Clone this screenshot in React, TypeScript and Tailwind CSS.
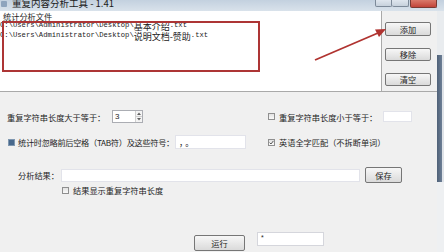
import type { FC, ReactNode } from 'react';

type BoxState = 'off' | 'on' | 'fill';

const CheckBox: FC<{ state?: BoxState }> = ({ state = 'off' }) => (
  <span
    className={
      state === 'fill'
        ? 'flex h-[7px] w-[7px] shrink-0 items-center justify-center border border-[#7f97b0] bg-[#47688c]'
        : 'flex h-[7px] w-[7px] shrink-0 items-center justify-center border border-[#8f8f8f] bg-linear-to-b from-[#e2e2e2] to-[#fafafa]'
    }
  >
    {state === 'on' && (
      <svg width="5" height="5" viewBox="0 0 5 5">
        <path d="M0.6 2.6 L2 4 L4.4 0.9" fill="none" stroke="#4a4a4a" strokeWidth="0.9" />
      </svg>
    )}
  </span>
);

const WinButton: FC<{ className: string; children: ReactNode }> = ({ className, children }) => (
  <button
    type="button"
    className={`flex shrink-0 items-center justify-center rounded-[2px] border border-[#767676] bg-linear-to-b from-[#f7f7f7] to-[#dadada] text-[8.2px] leading-none text-[#1e1e1e] ${className}`}
  >
    {children}
  </button>
);

const App: FC = () => {
  return (
    <div className="relative flex h-[252px] w-[444px] flex-col overflow-hidden bg-[#f0f0f0] font-['Noto_Sans_CJK_SC','Noto_Sans',sans-serif] text-[#1e1e1e]">
      {/* title bar, cut at top */}
      <div className="flex h-[11px] w-full shrink-0 items-start bg-linear-to-b from-[#c3d1df] to-[#d9e2eb]">
        <span className="ml-[1px] mt-[1px] h-[6px] w-[6px] rounded-[1px] bg-[#8ea4bd]" />
        <span className="ml-[5px] -mt-[2px] whitespace-nowrap text-[9.5px] leading-[11px] text-[#1b1b1b]">
          重复内容分析工具 - 1.41
        </span>
        <div className="ml-auto flex items-start">
          <span className="h-[7px] w-[17px] rounded-b-[2px] border border-t-0 border-[#7d8a99] bg-linear-to-b from-[#dfe6ee] to-[#c7d1dc]" />
          <span className="h-[7px] w-[17px] rounded-b-[2px] border border-t-0 border-l-0 border-[#7d8a99] bg-linear-to-b from-[#dfe6ee] to-[#c7d1dc]" />
          <span className="ml-[1px] mr-[7px] h-[8px] w-[27px] rounded-b-[2px] border border-t-0 border-[#7a3a33] bg-linear-to-b from-[#d9796b] to-[#c2443a]" />
        </div>
      </div>

      <div className="flex min-h-0 flex-1">
        {/* main window body */}
        <div className="flex w-[437px] shrink-0 flex-col">
          {/* file list section */}
          <div className="flex h-[81px] shrink-0 border-b border-[#a9a9a9]">
            <div className="relative w-[382px] shrink-0 border-r border-[#a9a9a9] bg-white">
              <div className="pl-[3px] text-[8.2px] leading-[10px]">统计分析文件</div>
              <div className="font-['Liberation_Mono','Noto_Sans_CJK_SC',monospace] text-[7.2px] text-[#222]">
                <div className="flex h-[10px] items-center whitespace-nowrap leading-none">
                  C:\Users\Administrator\Desktop\<span className="font-['Noto_Sans_CJK_SC',sans-serif] text-[9px] leading-none">基本介绍</span>.txt
                </div>
                <div className="flex h-[10px] items-center whitespace-nowrap leading-none">
                  C:\Users\Administrator\Desktop\<span className="font-['Noto_Sans_CJK_SC',sans-serif] text-[9px] leading-none">说明文档-赞助</span>.txt
                </div>
              </div>
              {/* red annotation box */}
              <div className="absolute left-[2px] top-[10px] h-[51px] w-[258px] border-2 border-[#ad3535]" />
            </div>
            <div className="flex flex-1 flex-col gap-[12px] pl-[3px] pt-[11px]">
              <WinButton className="h-[14px] w-[46px]">添加</WinButton>
              <WinButton className="h-[13px] w-[46px]">移除</WinButton>
              <WinButton className="h-[13px] w-[46px]">清空</WinButton>
            </div>
          </div>

          {/* options */}
          <div className="flex flex-col text-[8.2px] leading-[10px]">
            <div className="mt-[18px] flex h-[13px] items-center">
              <div className="flex w-[268px] shrink-0 items-center">
                <span className="ml-[7px] w-[105px] whitespace-nowrap">重复字符串长度大于等于：</span>
                <div className="flex h-[13px] w-[31px] items-stretch border border-[#abadb3] bg-white">
                  <span className="flex-1 pl-[2px] font-['Liberation_Sans',sans-serif] text-[8px] leading-[11px]">3</span>
                  <span className="flex w-[7px] flex-col border-l border-[#d0d0d0] bg-[#f4f4f4]">
                    <span className="flex flex-1 items-center justify-center border-b border-[#d0d0d0]">
                      <svg width="4" height="3" viewBox="0 0 4 3"><path d="M0 3 L2 0.5 L4 3 Z" fill="#606060" /></svg>
                    </span>
                    <span className="flex flex-1 items-center justify-center">
                      <svg width="4" height="3" viewBox="0 0 4 3"><path d="M0 0 L2 2.5 L4 0 Z" fill="#606060" /></svg>
                    </span>
                  </span>
                </div>
              </div>
              <CheckBox />
              <span className="ml-[4px] w-[104px] whitespace-nowrap">重复字符串长度小于等于：</span>
              <span className="h-[11px] w-[29px] border border-[#e2e3ea] bg-white" />
            </div>

            <div className="mt-[12px] flex h-[14px] items-center">
              <div className="flex w-[268px] shrink-0 items-center">
                <span className="ml-[8px]">
                  <CheckBox state="fill" />
                </span>
                <span className="ml-[3px] w-[157px] whitespace-nowrap tracking-[-0.3px]">统计时忽略前后空格（TAB符）及这些符号：</span>
                <span className="flex h-[14px] w-[71px] items-center border border-[#e2e3ea] bg-white pl-[3px] text-[8.5px] tracking-[2px]">，。</span>
              </div>
              <CheckBox state="on" />
              <span className="ml-[4px] whitespace-nowrap">英语全字匹配（不拆断单词）</span>
            </div>

            <div className="mt-[18px] flex h-[16px] items-center">
              <span className="ml-[18px] w-[43px] whitespace-nowrap">分析结果：</span>
              <span className="h-[13px] w-[299px] border border-[#e2e3ea] bg-white" />
              <WinButton className="ml-[5px] h-[16px] w-[37px]">保存</WinButton>
            </div>

            <div className="mt-[2px] flex h-[10px] items-center">
              <span className="ml-[62px]">
                <CheckBox />
              </span>
              <span className="ml-[4px] whitespace-nowrap">结果显示重复字符串长度</span>
            </div>

            <div className="mt-[37px] flex items-start">
              <WinButton className="ml-[194px] mt-[3px] h-[16px] w-[51px]">运行</WinButton>
              <span className="ml-[12px] h-[14px] w-[67px] border border-[#d5d6dc] bg-white pl-[3px] font-['Liberation_Sans',sans-serif] text-[7px] leading-[10px]">*</span>
            </div>
          </div>
        </div>

        {/* window edge on the right */}
        <div className="flex w-[7px] shrink-0 flex-col">
          <div className="h-[44px] bg-[#e9ecef]" />
          <div className="flex h-[127px]">
            <div className="w-[5px] bg-linear-to-r from-[#4f6178] to-[#6d7f96]" />
            <div className="flex-1 bg-[#dfe3e8]" />
          </div>
          <div className="flex-1 bg-[#eef0f2]" />
        </div>
      </div>

      {/* red annotation arrow */}
      <svg className="pointer-events-none absolute left-0 top-0" width="444" height="252">
        <line x1="315" y1="60" x2="378" y2="33" stroke="#b03330" strokeWidth="1.8" />
        <path d="M386 29 L375 29.5 L379 37 Z" fill="#b03330" />
      </svg>
    </div>
  );
};

export default App;
